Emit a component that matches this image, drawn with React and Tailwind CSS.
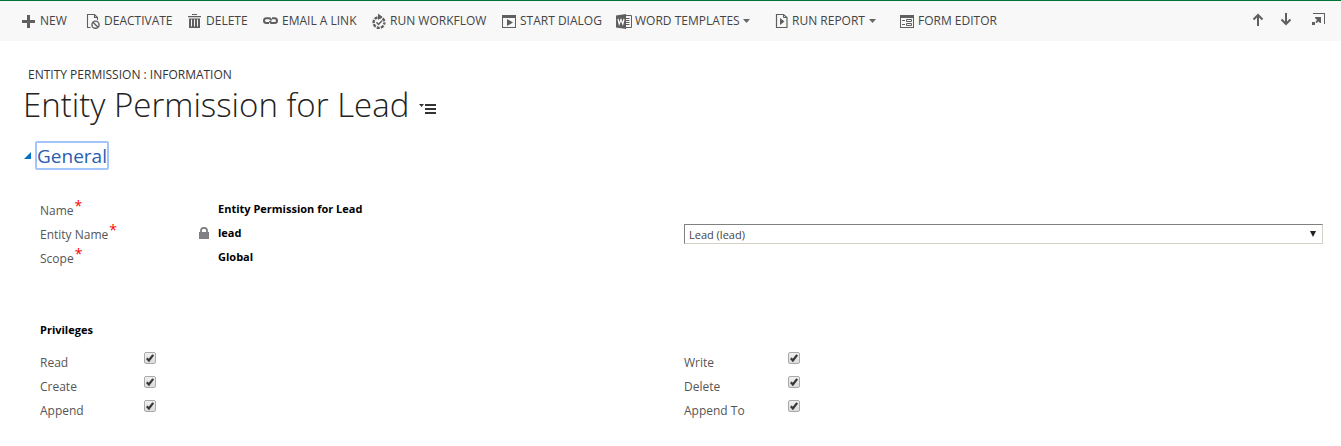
import React, { useState } from "react";

const ICON = "shrink-0 overflow-visible text-[#5f5f5f]";

function Icon({ name }) {
  switch (name) {
    case "new":
      return (
        <svg className={ICON} width="13" height="13" viewBox="0 0 13 13" fill="currentColor">
          <path d="M5 0h3v5h5v3H8v5H5V8H0V5h5z" />
        </svg>
      );
    case "deactivate":
      return (
        <svg className={ICON} width="13" height="15" viewBox="0 0 13 15" fill="none" stroke="currentColor">
          <path d="M3.5 13.5H.5V.5h7l3 3V6M7.5.5v3h3" strokeWidth="1.1" />
          <circle cx="8.5" cy="10.7" r="3.6" strokeWidth="1.4" />
          <path d="M6 8.2l5 5" strokeWidth="1.4" />
        </svg>
      );
    case "delete":
      return (
        <svg className={ICON} width="13" height="15" viewBox="0 0 13 15" fill="currentColor">
          <path d="M4 0h5v1H4zM0 2h13v1.3H0zM1 4.5h11V14H1z" />
          <path d="M3.5 5.5v7M6.5 5.5v7M9.5 5.5v7" stroke="#f8f8f8" />
        </svg>
      );
    case "link":
      return (
        <svg className={ICON} width="15" height="8" viewBox="0 0 15 8" fill="none" stroke="currentColor" strokeWidth="2">
          <path d="M6 6H3.500C1.900 6 1 5.100 1 3.700s.9-2.400 2.500-2.400H6c1.500 0 1.900 1 2 2.200" />
          <path d="M9 1.300h2.500c1.600 0 2.500.9 2.500 2.400S13.100 6 11.500 6H9C7.500 6 7.100 5 7 3.800" />
        </svg>
      );
    case "workflow":
      return (
        <svg className={ICON} width="14" height="15" viewBox="0 0 14 15" fill="none" stroke="currentColor">
          <circle cx="7" cy="8.5" r="5.4" strokeWidth="2.4" strokeDasharray="3.1 1.140" strokeDashoffset="1" />
          <path d="M6 -.5l4.500 3.500L6 6z" fill="currentColor" stroke="none" />
          <path d="M4.500 8.300l2 2.200 3.500-3.800" strokeWidth="1.500" />
        </svg>
      );
    case "dialog":
      return (
        <svg className={ICON} width="14" height="13" viewBox="0 0 14 13" fill="currentColor">
          <path d="M0 0h14v13H0zM1 3v9h12V3z" fillRule="evenodd" />
          <path d="M5 4l6 3.500L5 11z" />
        </svg>
      );
    case "word":
      return (
        <svg className={ICON} width="16" height="15" viewBox="0 0 16 15" fill="currentColor">
          <path d="M0 1.500L10 0v15L0 13.500z" />
          <path d="M10 1.500h5.500v12H10" fill="none" stroke="currentColor" />
          <path d="M10 4.500h3.500M10 6.500h3.500M10 8.500h3.500M10 10.500h3.500" stroke="currentColor" />
          <path d="M2 5l1.200 5L5 5.500 6.800 10 8 5" fill="none" stroke="#fff" strokeWidth="1.200" />
        </svg>
      );
    case "report":
      return (
        <svg className={ICON} width="12" height="14" viewBox="0 0 12 14" fill="none" stroke="currentColor">
          <path d="M.5.500h7l3.500 3v10H.5z" strokeWidth="1.200" />
          <path d="M7.500.500v3H11" />
          <path d="M4 4l4.500 3.500L4 11z" fill="currentColor" stroke="none" />
        </svg>
      );
    case "form":
      return (
        <svg className={ICON} width="14" height="13" viewBox="0 0 14 13" fill="currentColor">
          <path d="M0 0h14v13H0zM1 3v9h12V3z" fillRule="evenodd" />
          <path d="M2 5h3v1H2zM2 9h3v1H2z" />
          <path d="M6.500 4.500h5v2h-5zM6.500 8.500h5v2h-5z" fill="none" stroke="currentColor" />
        </svg>
      );
    default:
      return null;
  }
}

const commands = [
  { icon: "new", label: "NEW", box: "w-[65px]", pad: "gap-[5px]" },
  { icon: "deactivate", label: "DEACTIVATE", box: "w-[101px]", pad: "gap-[4px]" },
  { icon: "delete", label: "DELETE", box: "w-[75px]", pad: "gap-[5px]" },
  { icon: "link", label: "EMAIL A LINK", box: "w-[109px]", pad: "gap-[4px]" },
  { icon: "workflow", label: "RUN WORKFLOW", box: "w-[130px]", pad: "gap-[4px]" },
  { icon: "dialog", label: "START DIALOG", box: "w-[114px]", pad: "gap-[4px]" },
  { icon: "word", label: "WORD TEMPLATES", box: "w-[160px]", pad: "gap-[3px]", menu: true },
  { icon: "report", label: "RUN REPORT", box: "w-[124px]", pad: "gap-[4px]", menu: true },
  { icon: "form", label: "FORM EDITOR", box: "w-[100px]", pad: "gap-[4px]" },
];

function CommandBar() {
  return (
    <header className="flex h-[41px] items-center justify-between border-t border-[#00753a] bg-[#f8f8f8] pr-4 pl-[22px]">
      <nav aria-label="Commands" className="flex items-center">
        {commands.map((c) => (
          <button
            key={c.label}
            type="button"
            className={`flex h-6 shrink-0 items-center whitespace-nowrap text-[12px] text-[#444] ${c.box} ${c.pad}`}
          >
            <Icon name={c.icon} />
            <span>{c.label}</span>
            {c.menu && (
              <svg className="shrink-0 text-[#666]" width="7" height="4" viewBox="0 0 7 4" fill="currentColor">
                <path d="M0 0h7L3.500 4z" />
              </svg>
            )}
          </button>
        ))}
      </nav>
      <div className="flex items-center gap-4 pb-1 text-[#5f5f5f]">
        <button type="button" aria-label="Previous record">
          <svg width="12" height="13" viewBox="0 0 12 13" fill="none" stroke="currentColor" strokeWidth="2">
            <path d="M6 13V1.500M1.500 6.500L6 2l4.500 4.500" />
          </svg>
        </button>
        <button type="button" aria-label="Next record">
          <svg width="12" height="13" viewBox="0 0 12 13" fill="none" stroke="currentColor" strokeWidth="2">
            <path d="M6 0v11.500M1.500 6.500L6 11l4.500-4.500" />
          </svg>
        </button>
        <button type="button" aria-label="Open in new window" className="pl-1">
          <svg width="13" height="13" viewBox="0 0 13 13" fill="currentColor">
            <path d="M1 0h12v11h-1V1H1zM3 4h6v6H8L6.500 8.500 4.500 10 3.500 9 5 7 3 5zM0 9h3v3H0z" />
          </svg>
        </button>
      </div>
    </header>
  );
}

function Field({ label, locked, children }) {
  return (
    <div className="flex h-6 items-start">
      <dt className="flex w-[159px] gap-[1px] text-[#555]">
        <span className="pt-[2px]">{label}</span>
        <span className="text-[14px] leading-[10px] text-[#f00]">*</span>
      </dt>
      <dd className="flex items-center text-[11px] font-bold text-black">
        <span className="flex w-[19px]">
          {locked && (
            <svg width="10" height="12" viewBox="0 0 10 12" role="img" aria-label="Locked">
              <path d="M0 5h10v7H0z" fill="#808085" />
              <path d="M2 6V3.500a3 2.700 0 016 0V6" fill="none" stroke="#808085" strokeWidth="1.800" />
            </svg>
          )}
        </span>
        {children}
      </dd>
    </div>
  );
}

function Privilege({ label }) {
  const [on, setOn] = useState(true);
  return (
    <label className="flex h-6 items-start text-[#555]">
      <span className="w-[104px] pt-[3px]">{label}</span>
      <span className="grid size-3">
        <input
          type="checkbox"
          checked={on}
          onChange={(e) => setOn(e.target.checked)}
          className="col-start-1 row-start-1 size-3 appearance-none rounded-[2px] border border-[#a9a9a9] bg-linear-to-b from-[#f0f0f0] to-[#dcdcdc]"
        />
        {on && (
          <svg className="pointer-events-none col-start-1 row-start-1" width="12" height="12" viewBox="0 0 12 12">
            <path d="M2.800 6.300l2.100 2.200 4.300-5.700" fill="none" stroke="#383838" strokeWidth="2.200" />
          </svg>
        )}
      </span>
    </label>
  );
}

export default function App() {
  return (
    <div className="min-h-screen bg-white font-['Open_Sans',sans-serif] text-[12px] leading-4">
      <CommandBar />
      <main>
        <div className="pt-[26px] pl-7 text-[#333]">ENTITY PERMISSION : INFORMATION</div>
        <div className="flex items-center gap-[10px] pl-[23px]">
          <h1 className="text-[33px] leading-[44px] font-light whitespace-nowrap text-[#222]">
            Entity Permission for Lead
          </h1>
          <button type="button" aria-label="Switch form" className="pt-2">
            <svg width="18" height="12" viewBox="0 0 18 12" fill="#333">
              <path d="M0 1h5L2.500 4zM6 1h11v2H6zM6 5h11v2H6zM6 9h11v2H6z" />
            </svg>
          </button>
        </div>
        <h2 className="flex items-center gap-1 pt-[14px] pl-6">
          <svg width="7" height="7" viewBox="0 0 7 7" fill="#0072c6" aria-hidden="true">
            <path d="M7 0v7H0z" />
          </svg>
          <button
            type="button"
            className="h-[29px] rounded-[2px] border-2 border-[#a3c5fb] text-[19px] leading-6 text-[#2a5db0]"
          >
            General
          </button>
        </h2>

        <section className="grid grid-cols-2 gap-x-[5px] pt-[31px] pr-[18px] pl-10">
          <dl>
            <Field label="Name">Entity Permission for Lead</Field>
            <Field label="Entity Name" locked>
              lead
            </Field>
            <Field label="Scope">Global</Field>
          </dl>
          <div className="relative self-start pt-[23px]">
            <select
              aria-label="Entity Name"
              className="block h-5 w-full appearance-none border border-t-[#808080] border-r-[#d4d0c8] border-b-[#d4d0c8] border-l-[#808080] bg-white pt-[2px] pl-1 text-[11px] text-[#444]"
            >
              <option>Lead (lead)</option>
            </select>
            <svg
              className="pointer-events-none absolute right-[7px] bottom-[7px]"
              width="6"
              height="6"
              viewBox="0 0 7 7"
              fill="#222"
              aria-hidden="true"
            >
              <path d="M0 0h7L3.500 7z" />
            </svg>
          </div>
        </section>

        <section className="pt-[49px] pr-[18px] pl-10">
          <h3 className="text-[11px] leading-4 font-bold text-black">Privileges</h3>
          <div className="grid grid-cols-2 gap-x-[5px] pt-[14px]">
            <Privilege label="Read" />
            <Privilege label="Write" />
            <Privilege label="Create" />
            <Privilege label="Delete" />
            <Privilege label="Append" />
            <Privilege label="Append To" />
          </div>
        </section>
      </main>
    </div>
  );
}
